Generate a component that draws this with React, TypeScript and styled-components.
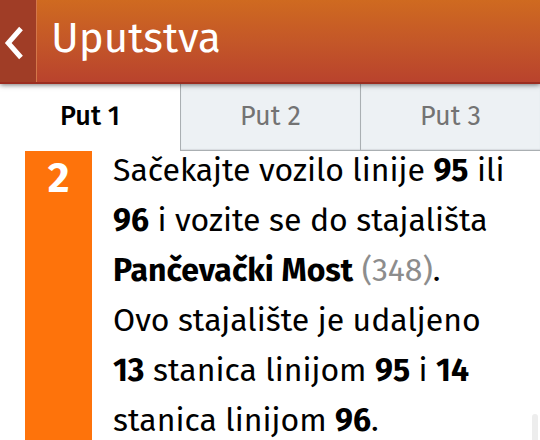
import React, { useState } from "react";
import styled, { createGlobalStyle } from "styled-components";

const GlobalStyle = createGlobalStyle`
  * { box-sizing: border-box; }
  body {
    margin: 0;
    background: #fff;
    color: #000;
    font-family: "Fira Sans", "Noto Sans", sans-serif;
  }
`;

const Page = styled.div`
  display: flex;
  flex-direction: column;
  height: 100vh;
  overflow: hidden;
`;

const Header = styled.header`
  position: relative;
  z-index: 1;
  display: flex;
  flex: none;
  height: 84px;
  background: linear-gradient(#cf6a20, #c45728 50%, #b9432d);
  border-bottom: 2px solid #9b2d20;
  box-shadow: 0 1px 5px rgba(0, 0, 0, 0.55);
`;

const BackButton = styled.button`
  display: flex;
  align-items: center;
  flex: none;
  width: 37px;
  padding: 3px 0 0 4px;
  border: 0;
  border-right: 1px solid #d4774a;
  background: #a03d26;
  cursor: pointer;
`;

const Title = styled.h1`
  margin: 0;
  padding-left: 14px;
  color: #fff;
  font-size: 42px;
  font-weight: 400;
  line-height: 76px;
`;

const Tabs = styled.div`
  display: grid;
  grid-template-columns: repeat(3, 1fr);
  flex: none;
  height: 67px;
`;

const Tab = styled.button<{ $active: boolean }>`
  padding: ${(p) => (p.$active ? "0 0 4px" : "0 0 3px")};
  border: 0 solid #aaafb2;
  border-width: ${(p) => (p.$active ? "0" : "0 0 1px 1px")};
  background: ${(p) => (p.$active ? "#fff" : "#edf1f4")};
  box-shadow: ${(p) => (p.$active ? "none" : "inset 0 -1px 1px #d7dbdf")};
  color: ${(p) => (p.$active ? "#000" : "#737373")};
  font-family: inherit;
  font-size: 27px;
  font-weight: ${(p) => (p.$active ? 500 : 400)};
  cursor: pointer;
`;

const Content = styled.main`
  position: relative;
  display: flex;
  flex: 1;
  min-height: 0;
  padding: 0 32px 0 25px;
  overflow: hidden;
`;

const StepNumber = styled.div`
  flex: none;
  width: 67px;
  background: #fe730b;
  color: #fff;
  font-size: 42px;
  font-weight: 700;
  line-height: 54px;
  text-align: center;
`;

const Instructions = styled.div`
  flex: 1;
  margin-top: -6px;
  padding-left: 21px;
  font-size: 32px;
  font-weight: 400;
  line-height: 50px;

  p { margin: 0; }
  b { font-weight: 700; }
`;

const StopCode = styled.span`
  color: #8d8d8d;
`;

const ScrollThumb = styled.div`
  position: absolute;
  right: 2px;
  bottom: -30px;
  width: 6px;
  height: 56px;
  border-radius: 3px;
  background: #ededed;
`;

const tabs = ["Put 1", "Put 2", "Put 3"];

export default function App() {
  const [active, setActive] = useState(0);
  return (
    <Page>
      <GlobalStyle />
      <Header>
        <BackButton aria-label="Nazad">
          <svg width="20" height="36" viewBox="0 0 20 36" fill="none">
            <path d="M17 3.5L4.2 18L17 32.5" stroke="#fff" strokeWidth="5" />
          </svg>
        </BackButton>
        <Title>Uputstva</Title>
      </Header>
      <Tabs role="tablist">
        {tabs.map((label, i) => (
          <Tab key={label} role="tab" aria-selected={i === active} $active={i === active} onClick={() => setActive(i)}>
            {label}
          </Tab>
        ))}
      </Tabs>
      <Content>
        <StepNumber>2</StepNumber>
        <Instructions>
          <p>
            Sačekajte vozilo linije <b>95</b> ili <b>96</b> i vozite se do stajališta{" "}
            <b>Pančevački Most</b> <StopCode>(348)</StopCode>.
          </p>
          <p>
            Ovo stajalište je udaljeno <b>13</b> stanica linijom <b>95</b> i <b>14</b> stanica linijom <b>96</b>.
          </p>
        </Instructions>
        <ScrollThumb />
      </Content>
    </Page>
  );
}
